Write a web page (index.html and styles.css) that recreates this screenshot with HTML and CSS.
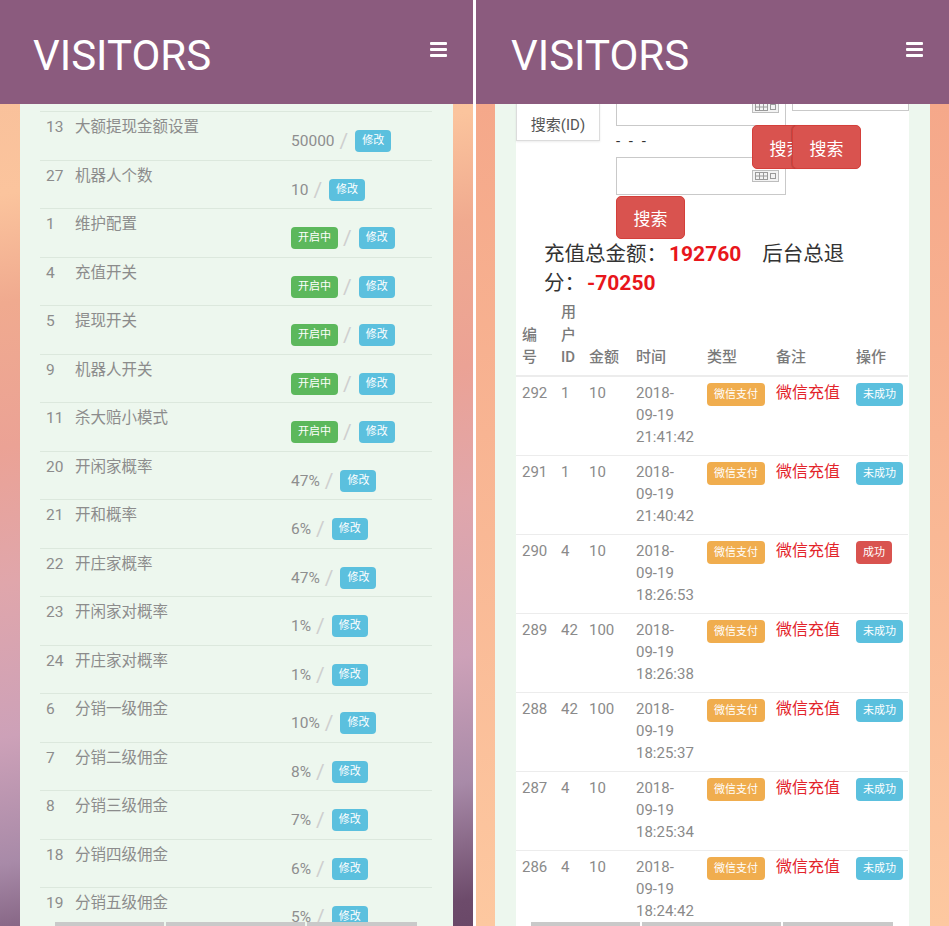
FILE: index.html
```html
<!DOCTYPE html>
<html lang="zh-CN">
<head>
<meta charset="utf-8">
<title>VISITORS</title>
<link rel="stylesheet" href="styles.css">
</head>
<body>
<div class="screens">
  <section class="phone">
    <header class="topbar">
      <h1 class="brand">VISITORS</h1>
      <svg class="menu" viewBox="0 0 17 15"><rect x="0" y="0" width="17" height="3" rx="1"/><rect x="0" y="6" width="17" height="3" rx="1"/><rect x="0" y="12" width="17" height="3" rx="1"/></svg>
    </header>
    <div class="screen-body body-config">
      <div class="card card-config">
        <ul class="config-list">
          <li class="config-row"><span class="cid">13</span><span class="cname">大额提现金额设置</span><span class="cval"><span class="num">50000</span><span class="sep">/</span><span class="tag tag-info">修改</span></span></li>
          <li class="config-row"><span class="cid">27</span><span class="cname">机器人个数</span><span class="cval"><span class="num">10</span><span class="sep">/</span><span class="tag tag-info">修改</span></span></li>
          <li class="config-row"><span class="cid">1</span><span class="cname">维护配置</span><span class="cval"><span class="tag tag-success">开启中</span><span class="sep">/</span><span class="tag tag-info">修改</span></span></li>
          <li class="config-row"><span class="cid">4</span><span class="cname">充值开关</span><span class="cval"><span class="tag tag-success">开启中</span><span class="sep">/</span><span class="tag tag-info">修改</span></span></li>
          <li class="config-row"><span class="cid">5</span><span class="cname">提现开关</span><span class="cval"><span class="tag tag-success">开启中</span><span class="sep">/</span><span class="tag tag-info">修改</span></span></li>
          <li class="config-row"><span class="cid">9</span><span class="cname">机器人开关</span><span class="cval"><span class="tag tag-success">开启中</span><span class="sep">/</span><span class="tag tag-info">修改</span></span></li>
          <li class="config-row"><span class="cid">11</span><span class="cname">杀大赔小模式</span><span class="cval"><span class="tag tag-success">开启中</span><span class="sep">/</span><span class="tag tag-info">修改</span></span></li>
          <li class="config-row"><span class="cid">20</span><span class="cname">开闲家概率</span><span class="cval"><span class="num">47%</span><span class="sep">/</span><span class="tag tag-info">修改</span></span></li>
          <li class="config-row"><span class="cid">21</span><span class="cname">开和概率</span><span class="cval"><span class="num">6%</span><span class="sep">/</span><span class="tag tag-info">修改</span></span></li>
          <li class="config-row"><span class="cid">22</span><span class="cname">开庄家概率</span><span class="cval"><span class="num">47%</span><span class="sep">/</span><span class="tag tag-info">修改</span></span></li>
          <li class="config-row"><span class="cid">23</span><span class="cname">开闲家对概率</span><span class="cval"><span class="num">1%</span><span class="sep">/</span><span class="tag tag-info">修改</span></span></li>
          <li class="config-row"><span class="cid">24</span><span class="cname">开庄家对概率</span><span class="cval"><span class="num">1%</span><span class="sep">/</span><span class="tag tag-info">修改</span></span></li>
          <li class="config-row"><span class="cid">6</span><span class="cname">分销一级佣金</span><span class="cval"><span class="num">10%</span><span class="sep">/</span><span class="tag tag-info">修改</span></span></li>
          <li class="config-row"><span class="cid">7</span><span class="cname">分销二级佣金</span><span class="cval"><span class="num">8%</span><span class="sep">/</span><span class="tag tag-info">修改</span></span></li>
          <li class="config-row"><span class="cid">8</span><span class="cname">分销三级佣金</span><span class="cval"><span class="num">7%</span><span class="sep">/</span><span class="tag tag-info">修改</span></span></li>
          <li class="config-row"><span class="cid">18</span><span class="cname">分销四级佣金</span><span class="cval"><span class="num">6%</span><span class="sep">/</span><span class="tag tag-info">修改</span></span></li>
          <li class="config-row"><span class="cid">19</span><span class="cname">分销五级佣金</span><span class="cval"><span class="num">5%</span><span class="sep">/</span><span class="tag tag-info">修改</span></span></li>
        </ul>
      </div>
      <div class="hscroll"><span class="seg seg-a"></span><span class="seg seg-b"></span><span class="seg seg-c"></span></div>
    </div>
  </section>

  <section class="phone">
    <header class="topbar">
      <h1 class="brand brand-right">VISITORS</h1>
      <svg class="menu" viewBox="0 0 17 15"><rect x="0" y="0" width="17" height="3" rx="1"/><rect x="0" y="6" width="17" height="3" rx="1"/><rect x="0" y="12" width="17" height="3" rx="1"/></svg>
    </header>
    <div class="screen-body body-orders">
      <div class="card card-orders">
        <div class="panel">
          <form class="search">
            <span class="addon">搜索(ID)</span>
            <div class="range">
              <div class="date-input date-first">
                <svg class="cal" viewBox="0 0 27 12"><rect x="0.5" y="0.5" width="26" height="11" fill="#f3f3f3" stroke="#bdbdbd"/><rect x="3.5" y="2.5" width="12" height="7" fill="none" stroke="#9a9a9a"/><path d="M7.5 2.5v7M11.5 2.5v7M3.5 6h12" stroke="#9a9a9a" fill="none"/><rect x="18.5" y="3.5" width="5" height="5" fill="none" stroke="#9a9a9a"/></svg>
              </div>
              <div class="dash">- - -</div>
              <div class="date-input">
                <svg class="cal" viewBox="0 0 27 12"><rect x="0.5" y="0.5" width="26" height="11" fill="#f3f3f3" stroke="#bdbdbd"/><rect x="3.5" y="2.5" width="12" height="7" fill="none" stroke="#9a9a9a"/><path d="M7.5 2.5v7M11.5 2.5v7M3.5 6h12" stroke="#9a9a9a" fill="none"/><rect x="18.5" y="3.5" width="5" height="5" fill="none" stroke="#9a9a9a"/></svg>
              </div>
              <button type="button" class="btn-red btn-c">搜索</button>
            </div>
            <div class="text-input"></div>
            <button type="button" class="btn-red btn-float btn-a">搜索</button>
            <button type="button" class="btn-red btn-float btn-b">搜索</button>
          </form>
          <p class="summary">充值总金额：<b class="amt">192760</b><span class="refund">后台总退分：<b class="amt">-70250</b></span></p>
          <table class="orders">
            <colgroup><col class="c1"><col class="c2"><col class="c3"><col class="c4"><col class="c5"><col class="c6"><col class="c7"></colgroup>
            <thead>
              <tr><th>编号</th><th>用户ID</th><th>金额</th><th>时间</th><th>类型</th><th>备注</th><th>操作</th></tr>
            </thead>
            <tbody>
              <tr><td>292</td><td>1</td><td>10</td><td class="time">2018-09-19 21:41:42</td><td><span class="tag tag-warn">微信支付</span></td><td class="note">微信充值</td><td><span class="tag tag-info">未成功</span></td></tr>
              <tr><td>291</td><td>1</td><td>10</td><td class="time">2018-09-19 21:40:42</td><td><span class="tag tag-warn">微信支付</span></td><td class="note">微信充值</td><td><span class="tag tag-info">未成功</span></td></tr>
              <tr><td>290</td><td>4</td><td>10</td><td class="time">2018-09-19 18:26:53</td><td><span class="tag tag-warn">微信支付</span></td><td class="note">微信充值</td><td><span class="tag tag-danger">成功</span></td></tr>
              <tr><td>289</td><td>42</td><td>100</td><td class="time">2018-09-19 18:26:38</td><td><span class="tag tag-warn">微信支付</span></td><td class="note">微信充值</td><td><span class="tag tag-info">未成功</span></td></tr>
              <tr><td>288</td><td>42</td><td>100</td><td class="time">2018-09-19 18:25:37</td><td><span class="tag tag-warn">微信支付</span></td><td class="note">微信充值</td><td><span class="tag tag-info">未成功</span></td></tr>
              <tr><td>287</td><td>4</td><td>10</td><td class="time">2018-09-19 18:25:34</td><td><span class="tag tag-warn">微信支付</span></td><td class="note">微信充值</td><td><span class="tag tag-info">未成功</span></td></tr>
              <tr><td>286</td><td>4</td><td>10</td><td class="time">2018-09-19 18:24:42</td><td><span class="tag tag-warn">微信支付</span></td><td class="note">微信充值</td><td><span class="tag tag-info">未成功</span></td></tr>
            </tbody>
          </table>
        </div>
      </div>
      <div class="hscroll"><span class="seg seg-a"></span><span class="seg seg-b"></span><span class="seg seg-c"></span></div>
    </div>
  </section>
</div>
</body>
</html>
```

FILE: styles.css
```css
* { box-sizing: border-box; }
html, body { margin: 0; padding: 0; background: #fff; }
body {
  width: 949px;
  height: 926px;
  overflow: hidden;
  font-family: Roboto, "Noto Sans CJK SC", sans-serif;
}

.screens { display: flex; gap: 3px; height: 926px; }
.phone {
  width: 473px;
  height: 926px;
  display: flex;
  flex-direction: column;
  overflow: hidden;
}

/* header */
.topbar {
  flex: none;
  height: 104px;
  background: #8b5b7e;
  display: flex;
  justify-content: space-between;
  align-items: flex-start;
  padding: 34px 26px 0 33px;
}
.brand {
  margin: 0;
  font-family: Roboto, sans-serif;
  font-weight: 400;
  font-size: 42px;
  line-height: 43px;
  color: #fff;
}
.brand-right { margin-left: 2px; }
.menu { width: 17px; height: 15px; margin-top: 8px; fill: #fff; }

/* body area */
.screen-body { flex: 1; display: flex; overflow: hidden; position: relative; }
.body-config {
  padding: 0 20px;
  background: linear-gradient(170deg, #f9c19b 0%, #fbc49d 10%, #f0aa8f 22%, #eba295 38%, #e0a6ab 53%, #cda1b8 70%, #a88aa8 84%, #6d4b6b 97%, #6a4868 100%);
}
.body-orders {
  padding: 0 20px 0 19px;
  background: linear-gradient(180deg, #f5a88a 0%, #f8b492 40%, #fdc8a0 100%);
}
.card { flex: 1; background: #edf7ee; }
.card-config { padding: 7px 21px 0 20px; }
.card-orders { padding: 0 21px; }

/* config list */
.config-list { list-style: none; margin: 0; padding: 0; }
.config-row {
  height: 48.5px;
  border-top: 1px solid #dce8dd;
  display: grid;
  grid-template-columns: 29px 216px 1fr;
  align-items: start;
  padding-left: 6px;
  color: #8c8c8c;
  font-size: 15.5px;
  line-height: 20px;
}
.cid, .cname { padding-top: 5px; }
.cval { display: flex; align-items: center; margin-top: 18px; height: 22px; }
.num { color: #8e8e8e; }
.sep { color: #cfcfcf; font-size: 21px; padding: 0 7px 0 5px; line-height: 22px; }

.tag {
  display: inline-block;
  height: 22px;
  line-height: 22px;
  padding: 0 7px;
  font-size: 11px;
  color: #fff;
  border-radius: 4px;
  white-space: nowrap;
}
.tag-info { background: #5bc0de; }
.tag-success { background: #5cb85c; }
.tag-warn { background: #f0ad4e; }
.tag-danger { background: #d9534f; }

/* bottom scroll bar */
.hscroll {
  position: absolute;
  left: 55px;
  bottom: 0;
  height: 4px;
  display: flex;
  gap: 2px;
}
.seg { background: #c9c9c9; height: 4px; }
.seg-a { width: 109px; }
.seg-b { width: 139px; }
.seg-c { width: 110px; }

/* orders panel */
.panel { background: #fff; min-height: 100%; }
.search {
  position: relative;
  display: flex;
  align-items: flex-start;
  margin: -20px 0 0;
}
.addon {
  width: 84px;
  height: 39px;
  margin-top: 18px;
  border: 1px solid #dcdcdc;
  box-shadow: 0 1px 2px rgba(0,0,0,0.08);
  font-size: 15px;
  color: #555;
  display: flex;
  align-items: center;
  justify-content: center;
  padding-top: 3px;
}
.range { width: 170px; margin-left: 16px; display: flex; flex-direction: column; align-items: flex-start; }
.date-input {
  width: 170px;
  height: 38px;
  border: 1px solid #c9c9c9;
  display: flex;
  justify-content: flex-end;
  align-items: flex-start;
  padding: 12px 6px 0 0;
  margin-top: 5px;
}
.date-first { margin-top: 4px; }
.cal { width: 27px; height: 12px; }
.dash { font-size: 15px; line-height: 21px; color: #333; margin-top: 5px; letter-spacing: 2.5px; }
.text-input { width: 117px; height: 38px; margin: -11px 0 0 6px; border: 1px solid #c9c9c9; }

.btn-red {
  width: 69px;
  height: 44px;
  border: 1px solid #d43f3a;
  border-radius: 5px;
  background: #d9534f;
  color: #fff;
  font-family: Roboto, "Noto Sans CJK SC", sans-serif;
  font-size: 17px;
  padding: 0;
  text-align: center;
}
.btn-c { margin-top: 1px; height: 43px; }
.btn-float { position: absolute; top: 41px; }
.btn-a { left: 236px; }
.btn-b { left: 276px; box-shadow: -1px 0 1px rgba(0,0,0,0.15); }

.summary {
  margin: 0;
  padding: 1px 50px 0 28px;
  font-size: 20.5px;
  line-height: 29px;
  color: #333;
}
.amt { color: #e8161b; font-weight: 700; font-size: 21px; margin-left: 2px; }
.refund { margin-left: 21px; }

.orders {
  width: 392px;
  table-layout: fixed;
  border-collapse: collapse;
  font-size: 15px;
  color: #8a8a8a;
}
.c1 { width: 39px; }
.c2 { width: 28px; }
.c3 { width: 47px; }
.c4 { width: 71px; }
.c5 { width: 69px; }
.c6 { width: 80px; }
.c7 { width: 58px; }
.orders th {
  text-align: left;
  vertical-align: bottom;
  font-weight: 500;
  color: #7a7a7a;
  line-height: 22.5px;
  padding: 3px 6px 6px;
  border-bottom: 2px solid #ececec;
}
.orders td {
  vertical-align: top;
  line-height: 22px;
  padding: 5px 6px 7px;
  border-top: 1px solid #ececec;
}
.orders td.time { padding-right: 10px; }
.orders td .tag { height: 23px; line-height: 23px; vertical-align: top; margin-top: 1px; }
.orders td.note { color: #e3242b; font-size: 16px; white-space: nowrap; }
```
